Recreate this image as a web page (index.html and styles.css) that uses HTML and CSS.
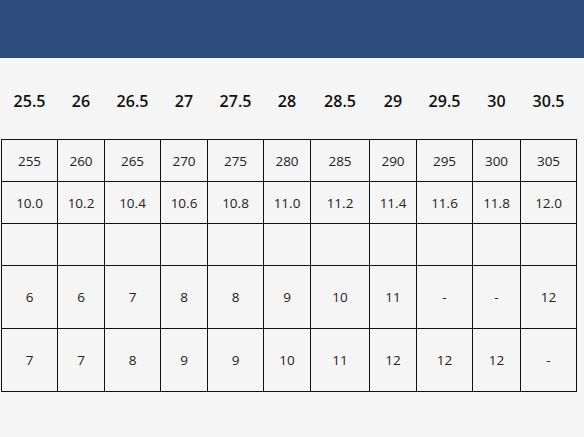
FILE: index.html
```html
<!DOCTYPE html>
<html>
<head>
<meta charset="utf-8">
<link rel="stylesheet" href="styles.css">
</head>
<body>
<header class="topbar"></header>
<main class="content">
<table class="size-table">
<colgroup>
<col class="c-wide"><col class="c-narrow"><col class="c-wide"><col class="c-narrow"><col class="c-wide"><col class="c-narrow"><col class="c-xwide"><col class="c-narrow"><col class="c-wide"><col class="c-mid"><col class="c-wide">
</colgroup>
<thead>
<tr><th>25.5</th><th>26</th><th>26.5</th><th>27</th><th>27.5</th><th>28</th><th>28.5</th><th>29</th><th>29.5</th><th>30</th><th>30.5</th></tr>
</thead>
<tbody>
<tr class="r-short"><td>255</td><td>260</td><td>265</td><td>270</td><td>275</td><td>280</td><td>285</td><td>290</td><td>295</td><td>300</td><td>305</td></tr>
<tr class="r-short"><td>10.0</td><td>10.2</td><td>10.4</td><td>10.6</td><td>10.8</td><td>11.0</td><td>11.2</td><td>11.4</td><td>11.6</td><td>11.8</td><td>12.0</td></tr>
<tr class="r-short"><td></td><td></td><td></td><td></td><td></td><td></td><td></td><td></td><td></td><td></td><td></td></tr>
<tr class="r-tall"><td>6</td><td>6</td><td>7</td><td>8</td><td>8</td><td>9</td><td>10</td><td>11</td><td>-</td><td>-</td><td>12</td></tr>
<tr class="r-tall"><td>7</td><td>7</td><td>8</td><td>9</td><td>9</td><td>10</td><td>11</td><td>12</td><td>12</td><td>12</td><td>-</td></tr>
</tbody>
</table>
</main>
</body>
</html>
```
FILE: styles.css
```css
html, body {
  margin: 0;
  padding: 0;
  background: #f5f5f5;
  font-family: "Open Sans", "Noto Sans", sans-serif;
  color: #1a1a1a;
}
.topbar {
  height: 58px;
  background: #2c4c7c;
}
.content {
  padding: 0 7px 0 1px;
}
.size-table {
  border-collapse: collapse;
  table-layout: fixed;
  width: 576px;
}
.c-wide { width: 56px; }
.c-narrow { width: 47px; }
.c-xwide { width: 59px; }
.c-mid { width: 48px; }
.size-table th {
  height: 76px;
  padding: 5px 0 0 0;
  font-size: 16px;
  font-weight: 600;
  color: #111;
  text-align: center;
  vertical-align: middle;
}
.size-table td {
  border: 1px solid #111;
  padding: 0;
  text-align: center;
  vertical-align: middle;
  font-size: 13.5px;
  color: #222;
}
.r-short td { height: 41px; }
.r-tall td { height: 62px; }
```
